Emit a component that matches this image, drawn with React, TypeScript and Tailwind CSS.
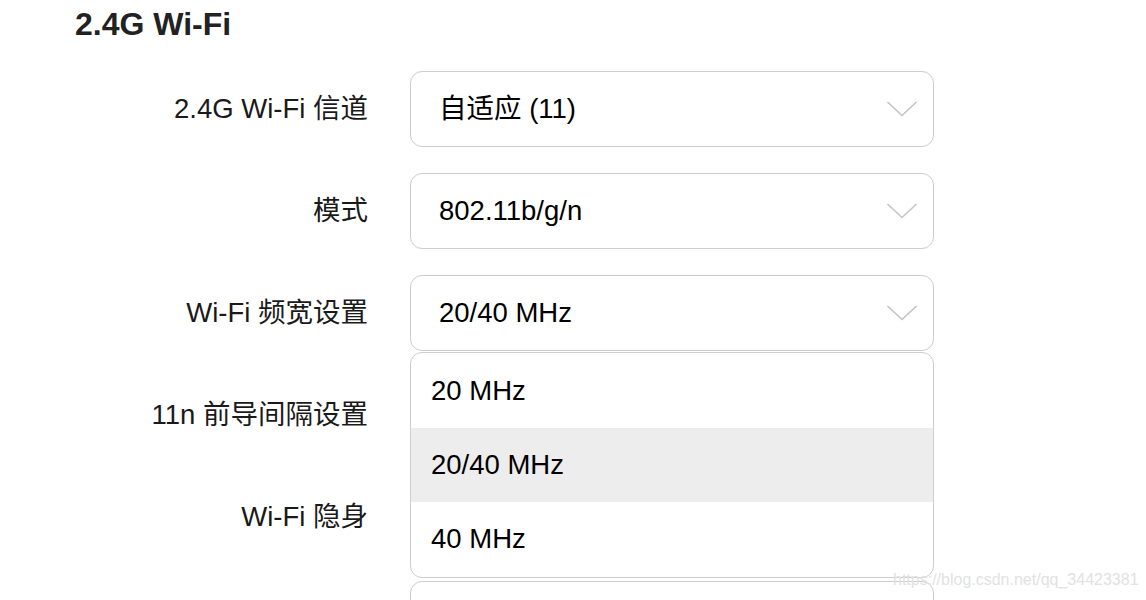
const rows = [
  { label: "2.4G Wi-Fi 信道", value: "自适应 (11)" },
  { label: "模式", value: "802.11b/g/n" },
  { label: "Wi-Fi 频宽设置", value: "20/40 MHz", open: true },
  { label: "11n 前导间隔设置", value: "" },
  { label: "Wi-Fi 隐身", value: "" },
  { label: "", value: "" },
];

const options = ["20 MHz", "20/40 MHz", "40 MHz"];

const font = { fontFamily: '"Liberation Sans", "Noto Sans CJK SC", sans-serif' };

const Chevron = () => (
  <svg width="32" height="18" viewBox="0 0 32 18" fill="none" className="shrink-0">
    <path d="M1.5 2 L16 15.5 L30.5 2" stroke="#c4c4c4" strokeWidth="1.6" />
  </svg>
);

export default function App() {
  return (
    <div className="relative h-[600px] overflow-hidden bg-white text-[#111]" style={font}>
      <h1 className="pl-[75px] pt-[5px] text-[32px] font-bold leading-[38px] text-[#222]">2.4G Wi-Fi</h1>
      <div className="mt-[28px] flex flex-col gap-[26px]">
        {rows.map((r, i) => (
          <div key={i} className="flex items-center">
            <div className="w-[368px] text-right text-[27.5px] leading-none text-[#1a1a1a]">{r.label}</div>
            <div className="relative ml-[42px] w-[524px]">
              <div className="flex h-[76px] items-center justify-between rounded-[12px] border-[1.5px] border-[#cdcdcd] pl-[28px] pr-[15px]">
                <span className="text-[27.5px] leading-none text-black">{r.value}</span>
                {i < 3 && <Chevron />}
              </div>
              {r.open && (
                <div className="absolute left-0 right-0 top-[77px] z-10 overflow-hidden rounded-[12px] border-[1.5px] border-[#cdcdcd] bg-white py-[1px]">
                  {options.map((o) => (
                    <div
                      key={o}
                      className={
                        "flex h-[74px] items-center pl-[20px] text-[27.5px] leading-none text-black " +
                        (o === "20/40 MHz" ? "bg-[#ededed]" : "")
                      }
                    >
                      {o}
                    </div>
                  ))}
                </div>
              )}
            </div>
          </div>
        ))}
      </div>
      <div className="absolute left-[893px] top-[572px] z-20 whitespace-nowrap text-[16px] leading-none text-[#e2e2e2]">
        https://blog.csdn.net/qq_34423381
      </div>
    </div>
  );
}
